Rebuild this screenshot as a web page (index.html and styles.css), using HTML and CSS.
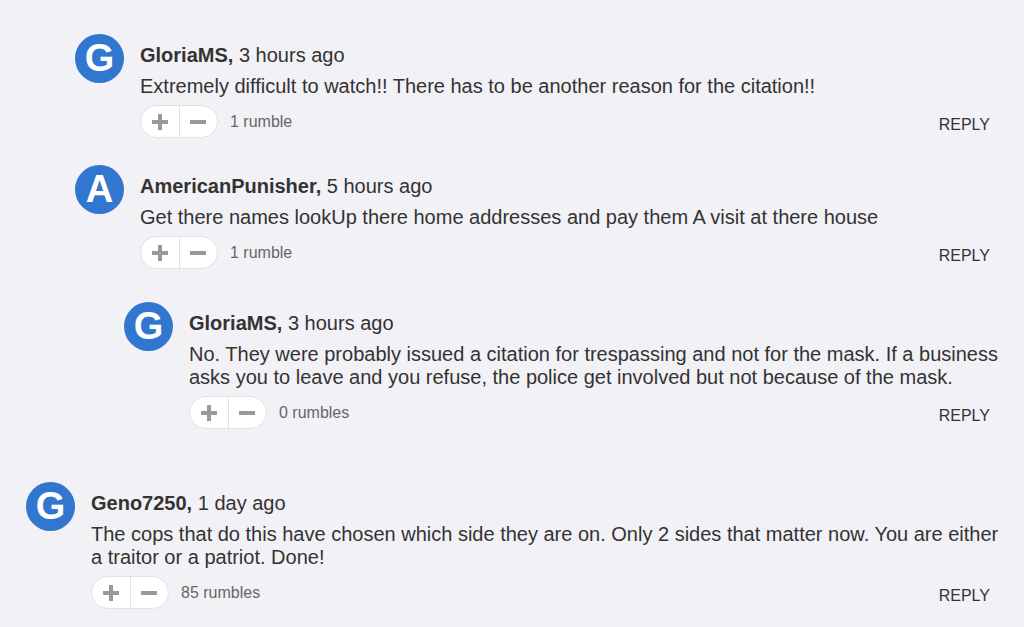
FILE: index.html
```html
<!DOCTYPE html>
<html lang="en">
<head>
    <meta charset="UTF-8">
    <meta name="viewport" content="width=device-width, initial-scale=1.0">
    <title>Comments</title>
    <link rel="stylesheet" href="styles.css">
</head>
<body>
    <ul class="comments">
        <li class="comment level-2">
            <div class="avatar">G</div>
            <div class="comment-body">
                <p class="comment-meta"><a href="#" class="author">GloriaMS,</a> 3 hours ago</p>
                <p class="comment-text">Extremely difficult to watch!! There has to be another reason for the citation!!</p>
                <div class="comment-actions">
                    <div class="votes">
                        <button type="button" class="vote" aria-label="Rumble up"><svg viewBox="0 0 16 16"><path d="M8 0v16M0 8h16"/></svg></button>
                        <button type="button" class="vote" aria-label="Rumble down"><svg viewBox="0 0 16 16"><path d="M0 8h16"/></svg></button>
                    </div>
                    <span class="count">1 rumble</span>
                    <button type="button" class="reply">REPLY</button>
                </div>
            </div>
        </li>
        <li class="comment level-2">
            <div class="avatar">A</div>
            <div class="comment-body">
                <p class="comment-meta"><a href="#" class="author">AmericanPunisher,</a> 5 hours ago</p>
                <p class="comment-text">Get there names lookUp there home addresses and pay them A visit at there house</p>
                <div class="comment-actions">
                    <div class="votes">
                        <button type="button" class="vote" aria-label="Rumble up"><svg viewBox="0 0 16 16"><path d="M8 0v16M0 8h16"/></svg></button>
                        <button type="button" class="vote" aria-label="Rumble down"><svg viewBox="0 0 16 16"><path d="M0 8h16"/></svg></button>
                    </div>
                    <span class="count">1 rumble</span>
                    <button type="button" class="reply">REPLY</button>
                </div>
            </div>
        </li>
        <li class="comment level-3">
            <div class="avatar">G</div>
            <div class="comment-body">
                <p class="comment-meta"><a href="#" class="author">GloriaMS,</a> 3 hours ago</p>
                <p class="comment-text">No. They were probably issued a citation for trespassing and not for the mask. If a business asks you to leave and you refuse, the police get involved but not because of the mask.</p>
                <div class="comment-actions">
                    <div class="votes">
                        <button type="button" class="vote" aria-label="Rumble up"><svg viewBox="0 0 16 16"><path d="M8 0v16M0 8h16"/></svg></button>
                        <button type="button" class="vote" aria-label="Rumble down"><svg viewBox="0 0 16 16"><path d="M0 8h16"/></svg></button>
                    </div>
                    <span class="count">0 rumbles</span>
                    <button type="button" class="reply">REPLY</button>
                </div>
            </div>
        </li>
        <li class="comment level-1">
            <div class="avatar">G</div>
            <div class="comment-body">
                <p class="comment-meta"><a href="#" class="author">Geno7250,</a> 1 day ago</p>
                <p class="comment-text">The cops that do this have chosen which side they are on. Only 2 sides that matter now. You are either a traitor or a patriot. Done!</p>
                <div class="comment-actions">
                    <div class="votes">
                        <button type="button" class="vote" aria-label="Rumble up"><svg viewBox="0 0 16 16"><path d="M8 0v16M0 8h16"/></svg></button>
                        <button type="button" class="vote" aria-label="Rumble down"><svg viewBox="0 0 16 16"><path d="M0 8h16"/></svg></button>
                    </div>
                    <span class="count">85 rumbles</span>
                    <button type="button" class="reply">REPLY</button>
                </div>
            </div>
        </li>
    </ul>
</body>
</html>
```
FILE: styles.css
```css
* {
    box-sizing: border-box;
}

body {
    margin: 0;
    background: #f2f1f6;
    color: #333;
    font-family: "Liberation Sans", Arial, sans-serif;
    font-size: 20px;
    line-height: 23px;
}

.comments {
    list-style: none;
    margin: 0;
    padding: 34px 20px 16px 26px;
}

.comment {
    display: flex;
    gap: 16px;
}

/* replies are indented one step per level */
.level-2 {
    margin-left: 49px;
    margin-bottom: 27px;
}

.level-3 {
    margin-left: 98px;
    margin-top: 33px;
    margin-bottom: 53px;
}

.avatar {
    flex: none;
    width: 49px;
    height: 49px;
    border-radius: 50%;
    background: #3277cf;
    color: #fff;
    font-size: 38px;
    font-weight: bold;
    line-height: 49px;
    text-align: center;
}

.comment-body {
    flex: 1;
    padding-top: 10px;
}

.comment-meta {
    margin: 0 0 8px;
}

.comment-text {
    margin: 0 0 7px;
}

.author {
    color: inherit;
    font-weight: bold;
    text-decoration: none;
}

.comment-actions {
    display: flex;
    align-items: center;
    padding-right: 14px;
}

.votes {
    display: flex;
    width: 78px;
    height: 33px;
    background: #fff;
    border: 1px solid #e2e2e5;
    border-radius: 17px;
}

.vote {
    flex: 1;
    display: flex;
    align-items: center;
    justify-content: center;
    padding: 0;
    border: 0;
    background: none;
    cursor: pointer;
}

.vote + .vote {
    border-left: 1px solid #e2e2e5;
}

.vote svg {
    width: 16px;
    height: 16px;
    fill: none;
    stroke: #999;
    stroke-width: 4;
}

.count {
    margin-left: 12px;
    color: #666;
    font-size: 16px;
}

.reply {
    margin-left: auto;
    padding: 6px 0 0;
    border: 0;
    background: none;
    color: #333;
    font-family: inherit;
    font-size: 16px;
    cursor: pointer;
}
```
